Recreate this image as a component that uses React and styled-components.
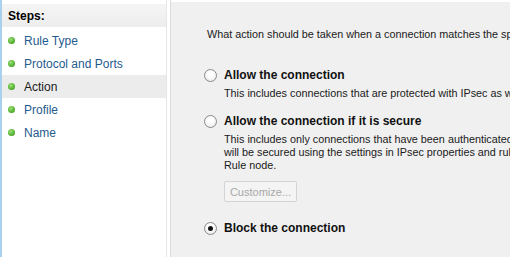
import React from 'react';
import styled, { createGlobalStyle } from 'styled-components';

const Global = createGlobalStyle`
  html, body { margin: 0; padding: 0; }
  body {
    width: 510px;
    height: 257px;
    overflow: hidden;
    background: #ffffff;
    font-family: "Liberation Sans", Arial, sans-serif;
  }
`;

const Window = styled.div`
  display: flex;
  width: 510px;
  height: 257px;
  overflow: hidden;
  background: #fff;
`;

const StepsPanel = styled.div`
  width: 164px;
  flex-shrink: 0;
  border-left: 2px solid #a8d1ee;
  border-right: 1px solid #e6e6e6;
  padding-top: 4px;
  background: #fff;
`;

const StepsHeader = styled.div`
  height: 23px;
  display: flex;
  align-items: center;
  padding-left: 6px;
  font-size: 12px;
  font-weight: bold;
  color: #000;
  background: linear-gradient(#f5f5f5, #ededed);
  margin-bottom: 2px;
`;

const StepList = styled.ul`
  list-style: none;
  margin: 0;
  padding: 0;
`;

const Step = styled.li`
  height: 23px;
  display: flex;
  align-items: center;
  padding-left: 6px;
  font-size: 12px;
  color: ${p => (p.$current ? '#1a1a1a' : '#1f5b8f')};
  background: ${p => (p.$current ? '#ececec' : 'transparent')};
`;

const Dot = styled.span`
  width: 7px;
  height: 7px;
  border-radius: 50%;
  margin-right: 9px;
  background: radial-gradient(circle at 40% 35%, #9fe07a 0%, #58b534 55%, #3a8a22 100%);
`;

const Gap = styled.div`
  width: 3px;
  flex-shrink: 0;
  background: #fff;
  border-right: 1px solid #dedede;
`;

const Content = styled.div`
  flex: 1;
  background: #f0f0f0;
  border-top: 2px solid #fff;
  padding: 26px 0 0 36px;
  overflow: hidden;
  white-space: nowrap;
  font-size: 10.8px;
  color: #1a1a1a;
`;

const Question = styled.div`
  margin-bottom: 27px;
`;

const Option = styled.div`
  display: flex;
  flex-direction: column;
  align-items: flex-start;
  margin-bottom: ${p => p.$mb || 0}px;
`;

const OptionLabel = styled.label`
  display: flex;
  align-items: center;
  gap: 7px;
  font-size: 12px;
  font-weight: bold;
  color: #111;
  height: 16px;
  margin-left: -3px;
`;

const Radio = styled.span`
  width: 11px;
  height: 11px;
  border-radius: 50%;
  border: 1px solid #8a8a8a;
  background: radial-gradient(circle at 50% 40%, #ffffff 30%, #e2e2e2 100%);
  display: flex;
  align-items: center;
  justify-content: center;
  &::after {
    content: "";
    width: 5px;
    height: 5px;
    border-radius: 50%;
    background: #111;
    display: ${p => (p.$checked ? 'block' : 'none')};
  }
`;

const Desc = styled.div`
  margin-left: 17px;
  margin-top: 4px;
  line-height: 13px;
  color: #1a1a1a;
`;

const CustomizeButton = styled.button`
  margin: 9px 0 0 17px;
  width: 73px;
  height: 21px;
  padding: 0;
  font-family: inherit;
  font-size: 11px;
  color: #a8a8a8;
  background: #f4f4f4;
  border: 1px solid #d4d4d4;
  border-radius: 2px;
  text-align: center;
`;

export default function App() {
  const steps = ['Rule Type', 'Protocol and Ports', 'Action', 'Profile', 'Name'];
  return (
    <>
      <Global />
      <Window>
        <StepsPanel>
          <StepsHeader>Steps:</StepsHeader>
          <StepList>
            {steps.map(s => (
              <Step key={s} $current={s === 'Action'}>
                <Dot />
                {s}
              </Step>
            ))}
          </StepList>
        </StepsPanel>
        <Gap />
        <Content>
          <Question>What action should be taken when a connection matches the specified conditions?</Question>
          <Option $mb={13}>
            <OptionLabel><Radio />Allow the connection</OptionLabel>
            <Desc>This includes connections that are protected with IPsec as well as those are not.</Desc>
          </Option>
          <Option $mb={18}>
            <OptionLabel><Radio />Allow the connection if it is secure</OptionLabel>
            <Desc>
              This includes only connections that have been authenticated by using IPsec. Connections
              <br />
              will be secured using the settings in IPsec properties and rules in the Connection Security
              <br />
              Rule node.
            </Desc>
            <CustomizeButton disabled>Customize...</CustomizeButton>
          </Option>
          <Option>
            <OptionLabel><Radio $checked />Block the connection</OptionLabel>
          </Option>
        </Content>
      </Window>
    </>
  );
}
